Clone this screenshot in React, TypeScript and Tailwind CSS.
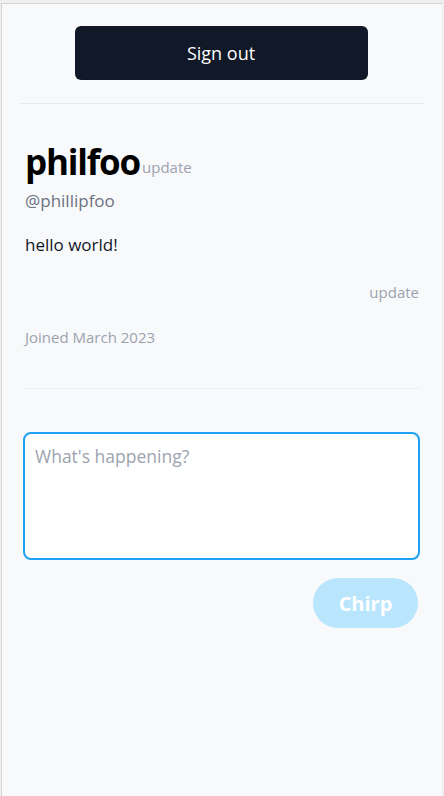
import React from "react";

export default function App() {
  return (
    <div className="min-h-screen bg-[#efefef] pt-[3px]" style={{ fontFamily: '"Open Sans", "Noto Sans", sans-serif' }}>
      <div className="ml-px mr-[2px] min-h-[793px] border-l border-t border-[#d4d4d4] bg-[#f8f9fb]">
        <div className="flex flex-col items-center pt-[22px]">
          <button className="mr-[2px] h-[54px] w-[293px] rounded-md bg-[#111827] text-[18px] text-white">
            Sign out
          </button>
        </div>
        <div className="mx-[18px] mt-[23px] h-px bg-[#e8eaed]" />
        <div className="px-[23px] pt-[38px]">
          <div className="flex items-end">
            <h1 className="text-[35px] font-bold leading-[40px] tracking-[-1.2px] text-black">philfoo</h1>
            <span className="mb-[4px] ml-[2px] text-[15px] text-[#9ca3af]">update</span>
          </div>
          <p className="mt-[6px] text-[17px] text-[#6b7280]">@phillipfoo</p>
          <p className="mt-[18px] text-[17px] text-[#111827]">hello world!</p>
          <div className="mt-[24px] flex justify-end">
            <span className="text-[15px] text-[#9ca3af]">update</span>
          </div>
          <p className="mt-[22px] text-[15px] text-[#9ca3af]">Joined March 2023</p>
        </div>
        <div className="mx-[22px] mt-[40px] h-px bg-[#eef0f2]" />
        <div className="pl-[21px] pr-[22px] pt-[43px]">
          <textarea
            className="block h-[128px] w-full resize-none rounded-lg border-2 border-[#1da1f2] bg-white px-[10px] pb-[6px] pt-[9px] text-[17.5px] outline-none placeholder:text-[#9ca3af]"
            placeholder="What's happening?"
          />
          <div className="mt-[18px] flex justify-end">
            <button className="mr-[2px] h-[50px] w-[105px] rounded-full bg-[#bae6fd] pt-[2px] text-[20px] font-bold text-white">
              Chirp
            </button>
          </div>
        </div>
      </div>
    </div>
  );
}
